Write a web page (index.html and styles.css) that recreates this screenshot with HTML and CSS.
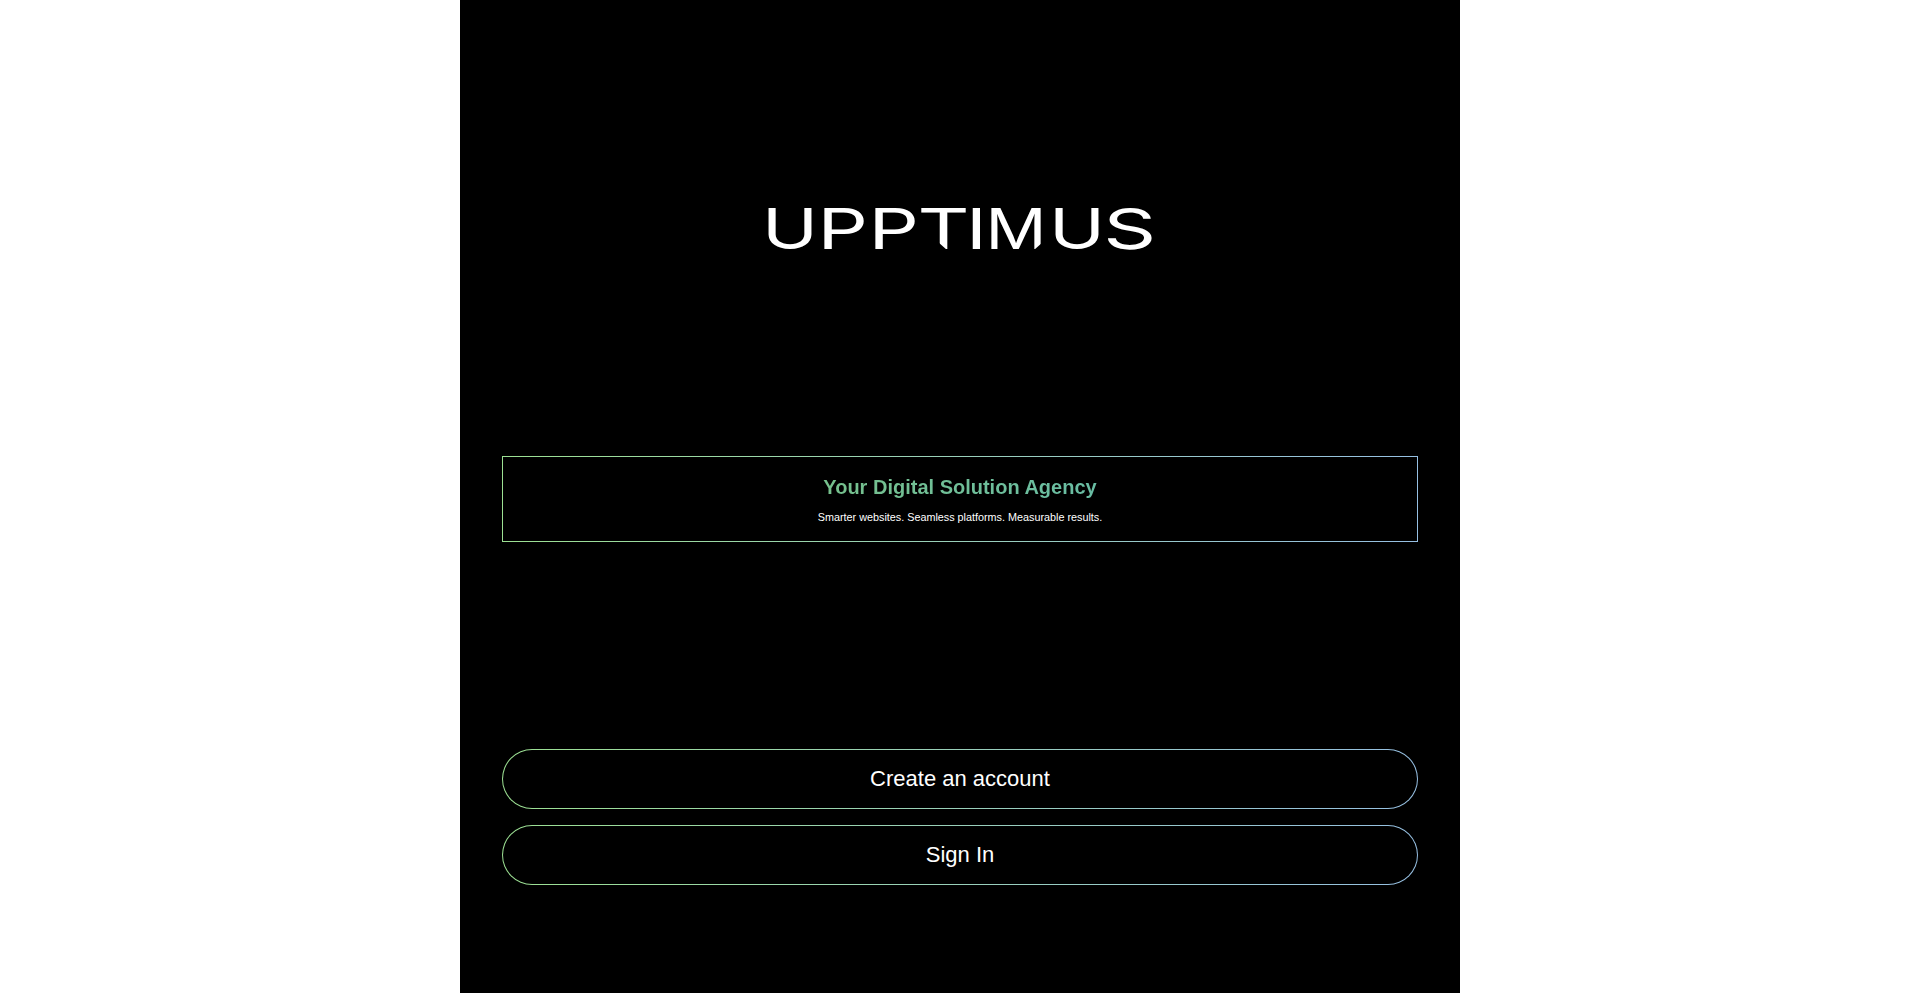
FILE: index.html
```html
<!DOCTYPE html>
<html lang="en">
<head>
<meta charset="utf-8">
<title>Upptimus</title>
<link rel="stylesheet" href="styles.css">
</head>
<body>
<main class="panel">
  <svg class="logo" viewBox="0 0 384 43" role="img" aria-label="UPPTIMUS">
    <text class="logo-text" y="41.5"><tspan x="-6" textLength="56" lengthAdjust="spacingAndGlyphs">U</tspan><tspan x="49.6" textLength="50.4" lengthAdjust="spacingAndGlyphs">P</tspan><tspan x="100.6" textLength="50.4" lengthAdjust="spacingAndGlyphs">P</tspan><tspan x="149.5" textLength="52" lengthAdjust="spacingAndGlyphs">T</tspan><tspan x="198" textLength="20.8" lengthAdjust="spacingAndGlyphs">I</tspan><tspan x="217.4" textLength="61" lengthAdjust="spacingAndGlyphs">M</tspan><tspan x="281" textLength="56" lengthAdjust="spacingAndGlyphs">U</tspan><tspan x="335.2" textLength="53" lengthAdjust="spacingAndGlyphs">S</tspan></text>
    <polygon class="logo-cut" points="170,35 179,43 170,43"/>
    <polygon class="logo-cut" points="275,35 266,43 275,43"/>
  </svg>
  <section class="notice">
    <h1 class="notice-title"><span class="notice-grad">Your Digital Solution Agency</span></h1>
    <p class="notice-text">Smarter websites. Seamless platforms. Measurable results.</p>
  </section>
  <div class="actions">
    <a class="btn" href="#">Create an account</a>
    <a class="btn" href="#">Sign In</a>
  </div>
</main>
</body>
</html>
```
FILE: styles.css
```css
* { box-sizing: border-box; }
html, body { margin: 0; height: 100%; background: #fff; }
body { font-family: "Liberation Sans", Arial, sans-serif; overflow: hidden; }
.panel {
  width: 1000px;
  height: 993px;
  margin: 0 auto;
  padding: 207px 42px 0;
  background: #000;
  display: flex;
  flex-direction: column;
  gap: 207px;
}
.logo { display: block; width: 384px; height: 43px; margin: 0 auto -1px; flex: none; overflow: visible; }
.logo-text { font-family: Inter, sans-serif; font-weight: 420; font-size: 56px; fill: #fff; }
.logo-cut { fill: #000; }
.notice, .btn {
  border: 1px solid transparent;
  background:
    linear-gradient(#000, #000) padding-box,
    linear-gradient(90deg, #9ce092, #96bfe2) border-box;
}
.notice { height: 86px; padding-top: 18px; text-align: center; }
.notice-title {
  margin: 0;
  font-size: 20px;
  line-height: 24px;
  font-weight: 700;
}
.notice-grad {
  background: linear-gradient(90deg, #76c08c, #69bda4);
  -webkit-background-clip: text;
  background-clip: text;
  color: transparent;
}
.notice-text { margin: 11px 0 0; font-size: 10.8px; line-height: 14px; color: #fff; }
.actions { display: flex; flex-direction: column; gap: 16px; }
.btn {
  display: flex;
  align-items: center;
  justify-content: center;
  height: 60px;
  border-radius: 30px;
  color: #fff;
  font-size: 22px;
  text-decoration: none;
}
```
